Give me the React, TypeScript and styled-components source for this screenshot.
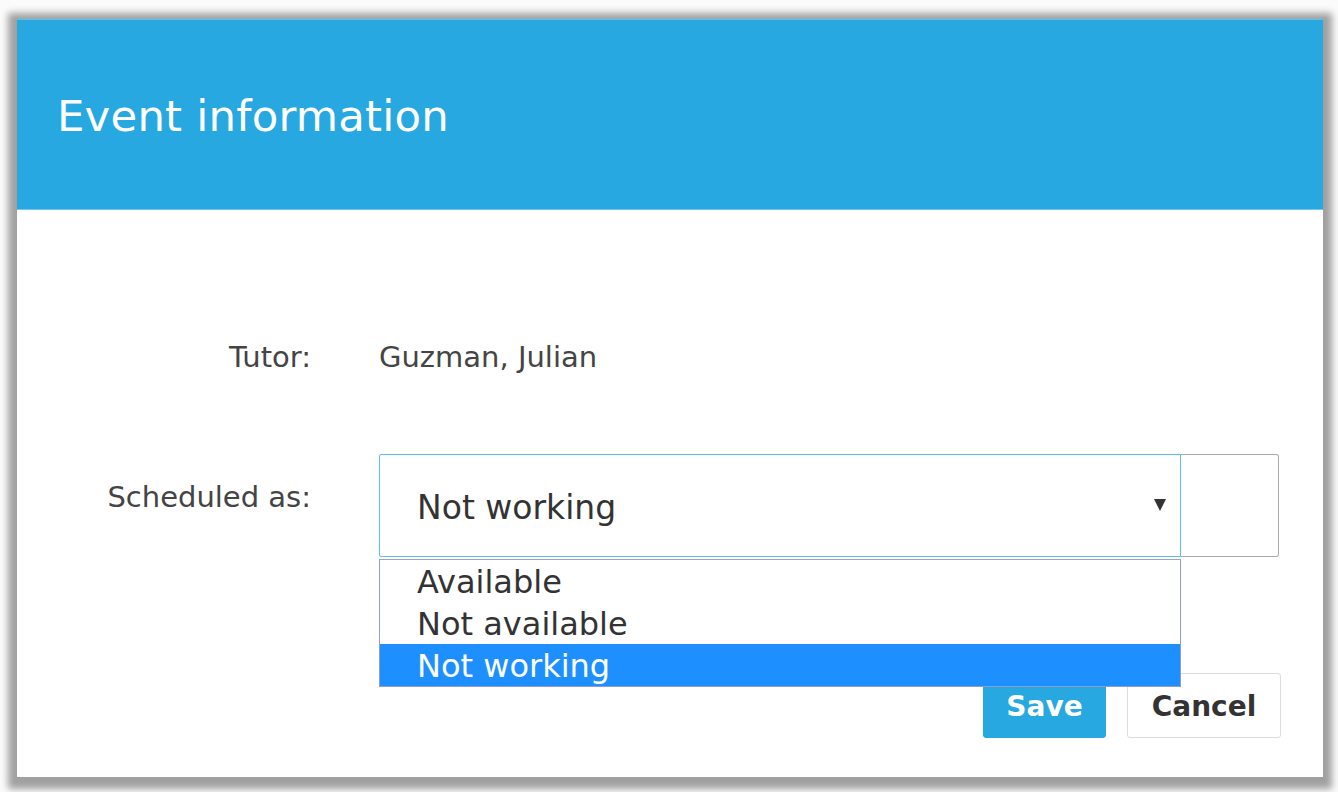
import React from 'react';
import styled, { createGlobalStyle } from 'styled-components';

const GlobalStyle = createGlobalStyle`
  html, body {
    margin: 0;
    padding: 0;
    background: #fbfbfb;
  }
  body {
    font-family: "DejaVu Sans", Verdana, sans-serif;
  }
`;

const Page = styled.div`
  width: 1338px;
  height: 792px;
  padding: 19px 0 0 17px;
  box-sizing: border-box;
`;

const Dialog = styled.div`
  width: 1306px;
  height: 758px;
  background: #fff;
  display: flex;
  flex-direction: column;
  box-shadow: 0 3px 7px 9px rgba(0, 0, 0, 0.36);
`;

const Header = styled.div`
  height: 191px;
  background: #28a8e0;
  border-top: 1px solid #55c2f0;
  border-bottom: 1px solid #6ccaf2;
  box-sizing: border-box;
  display: flex;
  align-items: center;
  padding: 3px 0 0 40px;
`;

const Title = styled.h1`
  margin: 0;
  font-size: 43.4px;
  font-weight: normal;
  color: #fff;
  letter-spacing: 0.2px;
`;

const Body = styled.div`
  flex: 1;
  display: flex;
  flex-direction: column;
  padding: 127px 42px 39px 0;
`;

const Row = styled.div<{ top?: number }>`
  display: grid;
  grid-template-columns: 294px 1fr;
  column-gap: 68px;
  align-items: ${({ top }) => (top !== undefined ? 'start' : 'center')};
  margin-top: ${({ top }) => top ?? 0}px;
  min-height: 40px;
`;

const Label = styled.div<{ offset?: number }>`
  text-align: right;
  font-size: 29px;
  color: #444;
  padding-top: ${({ offset }) => offset ?? 0}px;
`;

const Value = styled.div`
  font-size: 29px;
  color: #444;
`;

const SelectGroup = styled.div`
  position: relative;
  display: flex;
  width: 900px;
`;

const SelectBox = styled.div`
  width: 802px;
  height: 103px;
  box-sizing: border-box;
  border: 1px solid #5cc0ec;
  border-radius: 2px 0 0 2px;
  display: flex;
  align-items: center;
  justify-content: space-between;
  padding: 4px 14px 0 37px;
  font-size: 33px;
  color: #333;
`;

const Arrow = styled.span`
  width: 0;
  height: 0;
  border-left: 6px solid transparent;
  border-right: 6px solid transparent;
  border-top: 12px solid #333;
  margin-top: -6px;
`;

const Addon = styled.div`
  width: 98px;
  height: 103px;
  box-sizing: border-box;
  border: 1px solid #aaa;
  border-left: none;
  border-radius: 0 3px 3px 0;
`;

const OptionList = styled.ul`
  position: absolute;
  top: 105px;
  left: 0;
  width: 802px;
  box-sizing: border-box;
  margin: 0;
  padding: 0;
  list-style: none;
  background: #fff;
  border: 1px solid #8f9bd4;
  border-top-color: #9aa4c4;
  z-index: 2;
`;

const Option = styled.li<{ selected?: boolean }>`
  height: 42px;
  line-height: 44px;
  padding-left: 37px;
  font-size: 32px;
  color: ${({ selected }) => (selected ? '#fff' : '#333')};
  background: ${({ selected }) => (selected ? '#1e8fff' : '#fff')};
`;

const Actions = styled.div`
  margin-top: auto;
  display: flex;
  justify-content: flex-end;
  gap: 21px;
`;

const Button = styled.button<{ primary?: boolean }>`
  height: 65px;
  padding: 2px 22px 0;
  min-width: ${({ primary }) => (primary ? 123 : 154)}px;
  box-sizing: border-box;
  border-radius: 3px;
  font-family: "DejaVu Sans", Verdana, sans-serif;
  font-weight: bold;
  font-size: 28px;
  cursor: pointer;
  background: ${({ primary }) => (primary ? '#28a8e0' : '#fff')};
  color: ${({ primary }) => (primary ? '#fff' : '#333')};
  border: 1px solid ${({ primary }) => (primary ? '#28a8e0' : '#ddd')};
`;

const options = ['Available', 'Not available', 'Not working'];

export default function App() {
  const selected = 'Not working';
  return (
    <>
      <GlobalStyle />
      <Page>
        <Dialog>
          <Header>
            <Title>Event information</Title>
          </Header>
          <Body>
            <Row>
              <Label>Tutor:</Label>
              <Value>Guzman, Julian</Value>
            </Row>
            <Row top={77}>
              <Label offset={26}>Scheduled as:</Label>
              <SelectGroup>
                <SelectBox>
                  <span>{selected}</span>
                  <Arrow />
                </SelectBox>
                <Addon />
                <OptionList>
                  {options.map((o) => (
                    <Option key={o} selected={o === selected}>
                      {o}
                    </Option>
                  ))}
                </OptionList>
              </SelectGroup>
            </Row>
            <Actions>
              <Button primary>Save</Button>
              <Button>Cancel</Button>
            </Actions>
          </Body>
        </Dialog>
      </Page>
    </>
  );
}
